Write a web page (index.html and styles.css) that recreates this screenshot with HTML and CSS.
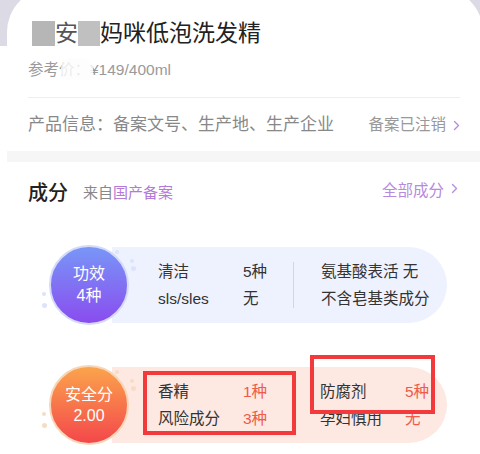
FILE: index.html
```html
<!DOCTYPE html>
<html lang="zh-CN">
<head>
    <meta charset="UTF-8">
    <meta name="viewport" content="width=device-width, initial-scale=1.0">
    <title>妈咪低泡洗发精</title>
    <link rel="stylesheet" href="styles.css">
</head>
<body>
    <div class="card">
        <div class="head">
            <h1 class="title"><span class="blur"></span><span class="mid">安</span><span class="blur blur-b"></span>妈咪低泡洗发精</h1>
            <p class="price">参考价：¥149/400ml</p>
            <div class="info">
                <span>产品信息：备案文号、生产地、生产企业</span>
                <a class="more">备案已注销
                    <svg width="7" height="11" viewBox="0 0 7 11"><path d="M1.5 1.5l4 4-4 4" fill="none" stroke="#b48ee0" stroke-width="1.4" stroke-linecap="round" stroke-linejoin="round"/></svg>
                </a>
            </div>
            <div class="wash"></div>
        </div>
        <div class="band"></div>
        <div class="section">
            <div class="sec-head">
                <h2>成分</h2>
                <span class="src">来自<em>国产备案</em></span>
                <a class="all">全部成分
                    <svg width="7" height="11" viewBox="0 0 7 11"><path d="M1.5 1.5l4 4-4 4" fill="none" stroke="#b48ee0" stroke-width="1.4" stroke-linecap="round" stroke-linejoin="round"/></svg>
                </a>
            </div>

            <div class="tag tag-blue">
                <span class="dot d1"></span><span class="dot d2"></span><span class="dot d3"></span>
                <span class="dot d4"></span><span class="dot d5"></span>
                <div class="badge">
                    <span>功效</span>
                    <span>4种</span>
                </div>
                <div class="panel">
                    <div class="grid">
                        <span>清洁</span><span>5种</span>
                        <span>sls/sles</span><span>无</span>
                    </div>
                    <div class="divider"></div>
                    <div class="grid grid-wide">
                        <span>氨基酸表活 无</span>
                        <span>不含皂基类成分</span>
                    </div>
                </div>
            </div>

            <div class="tag tag-red">
                <span class="dot d1"></span><span class="dot d2"></span><span class="dot d3"></span>
                <span class="dot d4"></span><span class="dot d5"></span>
                <div class="badge">
                    <span>安全分</span>
                    <span>2.00</span>
                </div>
                <div class="panel">
                    <div class="grid">
                        <span>香精</span><span class="hot">1种</span>
                        <span>风险成分</span><span class="hot">3种</span>
                    </div>
                    <div class="divider"></div>
                    <div class="grid">
                        <span>防腐剂</span><span class="hot">5种</span>
                        <span>孕妇慎用</span><span class="hot">无</span>
                    </div>
                </div>
                <div class="mark mark-a"></div>
                <div class="mark mark-b"></div>
            </div>
        </div>
    </div>
</body>
</html>
```

FILE: styles.css
```css
body {
    margin: 0;
    height: 454px;
    overflow: hidden;
    background: linear-gradient(#dcdae4 0 46px, #fff 46px);
    font-family: "Liberation Sans", "Noto Sans CJK SC", sans-serif;
}
.card {
    position: relative;
    margin: -12px 0 0 7px;
    width: 476px;
    height: 480px;
    background: #fff;
    border-radius: 44px 44px 0 0;
}
.head {
    position: relative;
    padding: 30px 23px 0 21px;
}
.title {
    display: flex;
    align-items: center;
    margin: 0;
    padding-left: 4px;
    font-size: 23px;
    line-height: 30px;
    font-weight: 400;
    color: #222;
}
.blur {
    display: inline-block;
    width: 23px;
    height: 25px;
    background: #b6b6b6;
}
.blur-b {
    width: 22px;
    background: #c0c0c0;
}
.mid {
    color: #555;
}
.price {
    margin: 11px 0 0;
    font-size: 15.5px;
    line-height: 22px;
    color: #9a9a9a;
}
.info {
    display: flex;
    justify-content: space-between;
    align-items: center;
    margin-top: 16px;
    padding-top: 16px;
    border-top: 1px solid #eee;
    font-size: 17px;
    line-height: 22px;
    color: #888;
}
.more {
    display: flex;
    align-items: center;
    gap: 7px;
    font-size: 15.5px;
    color: #999;
}
.wash {
    position: absolute;
    left: 54px;
    top: 70px;
    width: 32px;
    height: 22px;
    border-radius: 10px 10px 6px 6px;
    background: rgba(252, 252, 252, 0.82);
}
.band {
    margin-top: 15px;
    height: 11px;
    background: #f6f6f6;
}
.section {
    padding: 15px 25px 0 21px;
}
.sec-head {
    display: flex;
    align-items: center;
    height: 28px;
}
.sec-head h2 {
    margin: 0;
    font-size: 20px;
    font-weight: 500;
    color: #222;
}
.src {
    margin-left: 15px;
    font-size: 15px;
    color: #888;
}
.src em {
    font-style: normal;
    color: #b57ad8;
}
.all {
    display: flex;
    align-items: center;
    gap: 7px;
    margin: 0 0 5px auto;
    font-size: 15.5px;
    color: #b88ade;
}
.tag {
    position: relative;
    display: flex;
    align-items: center;
    margin: 40px 0 0 21px;
}
.badge {
    position: relative;
    z-index: 1;
    flex: none;
    display: flex;
    flex-direction: column;
    justify-content: center;
    align-items: center;
    box-sizing: border-box;
    width: 80px;
    height: 80px;
    border: 2px solid;
    border-radius: 50%;
    color: #fff;
    font-size: 16px;
    line-height: 22px;
}
.tag-blue .badge {
    border-color: #d4daf8;
    background: linear-gradient(#7896f7, #8a4cef);
}
.tag-red .badge {
    border-color: #f7d6b8;
    background: linear-gradient(#fba44c, #f4474b);
    line-height: 21px;
}
.panel {
    display: flex;
    align-items: center;
    box-sizing: border-box;
    margin-left: -17px;
    width: 335px;
    height: 76px;
    padding-left: 46px;
    border-radius: 0 38px 38px 0;
    font-size: 15.5px;
    color: #333;
}
.tag-blue .panel {
    background: #eef2fe;
}
.tag-red .panel {
    background: #fde8e2;
}
.grid {
    display: grid;
    grid-template-columns: 85px 50px;
    line-height: 27px;
}
.grid-wide {
    grid-template-columns: auto;
}
.divider {
    width: 1px;
    height: 46px;
    margin-right: 27px;
    background: #cfd6ea;
}
.tag-red .divider {
    background: #f3cfc5;
}
.hot {
    color: #ef5b48;
}
.dot {
    position: absolute;
    z-index: 2;
    width: 4px;
    height: 4px;
    border-radius: 50%;
}
.tag-blue .dot {
    background: #dce3fb;
}
.tag-red .dot {
    background: #f7dcc4;
}
.d1 { left: 66px; top: 5px; }
.d2 { left: 81px; top: 14px; }
.d3 { left: 82px; top: 21px; width: 5px; height: 5px; }
.d4 { left: -7px; top: 47px; }
.d5 { left: -7px; top: 58px; width: 5px; height: 5px; }
.mark {
    position: absolute;
    z-index: 3;
    box-sizing: border-box;
    border: 4px solid #f23a3c;
}
.mark-a {
    left: 94px;
    top: 6px;
    width: 153px;
    height: 64px;
}
.mark-b {
    left: 261px;
    top: -10px;
    width: 125px;
    height: 59px;
}
```
